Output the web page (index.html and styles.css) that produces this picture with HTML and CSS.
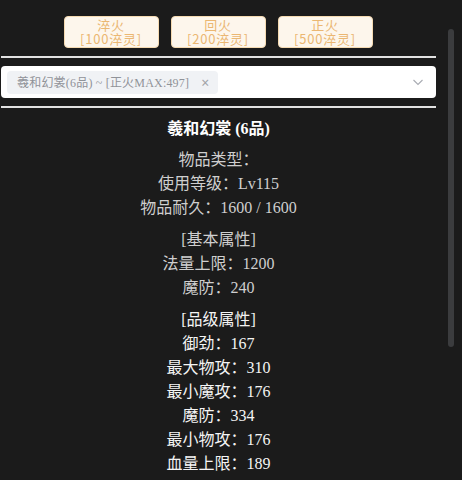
FILE: index.html
```html
<!DOCTYPE html>
<html lang="zh-CN">
<head>
<meta charset="utf-8">
<link rel="stylesheet" href="styles.css">
</head>
<body>
<div class="page">
  <div class="content">
    <div class="btns">
      <button class="btn">淬火<br>[100淬灵]</button>
      <button class="btn">回火<br>[200淬灵]</button>
      <button class="btn">正火<br>[500淬灵]</button>
    </div>
    <div class="rule"></div>
    <div class="select">
      <span class="tag">羲和幻裳(6品) ~ [正火MAX:497]<span class="close">×</span></span>
      <svg class="arrow" width="12" height="12" viewBox="0 0 12 12"><path d="M1.5 4 L6 8.5 L10.5 4" fill="none" stroke="#a8abb2" stroke-width="1.1"/></svg>
    </div>
    <div class="rule"></div>
    <div class="info">
      <div class="title">羲和幻裳 (6品)</div>
      <div class="group dim">
        <div>物品类型：</div>
        <div>使用等级：Lv115</div>
        <div>物品耐久：1600 / 1600</div>
      </div>
      <div class="group dim">
        <div>[基本属性]</div>
        <div>法量上限：1200</div>
        <div>魔防：240</div>
      </div>
      <div class="group bright">
        <div>[品级属性]</div>
        <div>御劲：167</div>
        <div>最大物攻：310</div>
        <div>最小魔攻：176</div>
        <div>魔防：334</div>
        <div>最小物攻：176</div>
        <div>血量上限：189</div>
      </div>
    </div>
  </div>
  <div class="scroll-thumb"></div>
</div>
</body>
</html>
```

FILE: styles.css
```css
html, body {
  margin: 0;
  padding: 0;
  background: #1b1b1b;
}
.page {
  position: relative;
  width: 462px;
  height: 480px;
  overflow: hidden;
  font-family: "Liberation Serif", "Noto Sans CJK SC", serif;
}
.content {
  width: 435px;
  margin-left: 1px;
  padding-top: 16px;
}
.btns {
  display: flex;
  justify-content: center;
  gap: 12px;
  margin-left: -1px;
}
.btn {
  width: 95px;
  height: 32px;
  box-sizing: border-box;
  padding: 0;
  background: #fdf6ec;
  border: 1px solid #f5dab1;
  border-radius: 4px;
  color: #ebb772;
  font-family: "Noto Sans CJK SC", sans-serif;
  font-size: 13px;
  line-height: 14px;
  letter-spacing: 0.8px;
}
.rule {
  height: 2px;
  background: #e2e2e2;
  margin: 8px 0;
}
.select {
  height: 32px;
  box-sizing: border-box;
  background: #fff;
  border-radius: 4px;
  display: flex;
  align-items: center;
  justify-content: space-between;
  padding: 0 12px 0 6px;
}
.tag {
  display: flex;
  align-items: center;
  height: 23px;
  padding: 0 9px 0 10px;
  background: #f0f2f5;
  border-radius: 4px;
  color: #909399;
  font-size: 12px;
  letter-spacing: 0.2px;
  font-family: "Liberation Serif", "Noto Sans CJK SC", serif;
}
.close {
  margin-left: 12px;
  font-family: "Noto Sans", sans-serif;
  font-size: 14px;
  color: #a0a3a8;
}
.arrow {
  display: block;
}
.info {
  text-align: center;
  font-size: 16px;
  line-height: 24px;
  padding-top: 1px;
}
.title {
  color: #fff;
  font-weight: bold;
}
.group {
  margin-top: 7px;
}
.group + .group {
  margin-top: 8px;
}
.dim {
  color: #cfcfcf;
}
.bright {
  color: #f4f4f4;
}
.scroll-thumb {
  position: absolute;
  right: 8px;
  top: 29px;
  width: 6px;
  height: 318px;
  border-radius: 3px;
  background: #3b3c3e;
}
```
